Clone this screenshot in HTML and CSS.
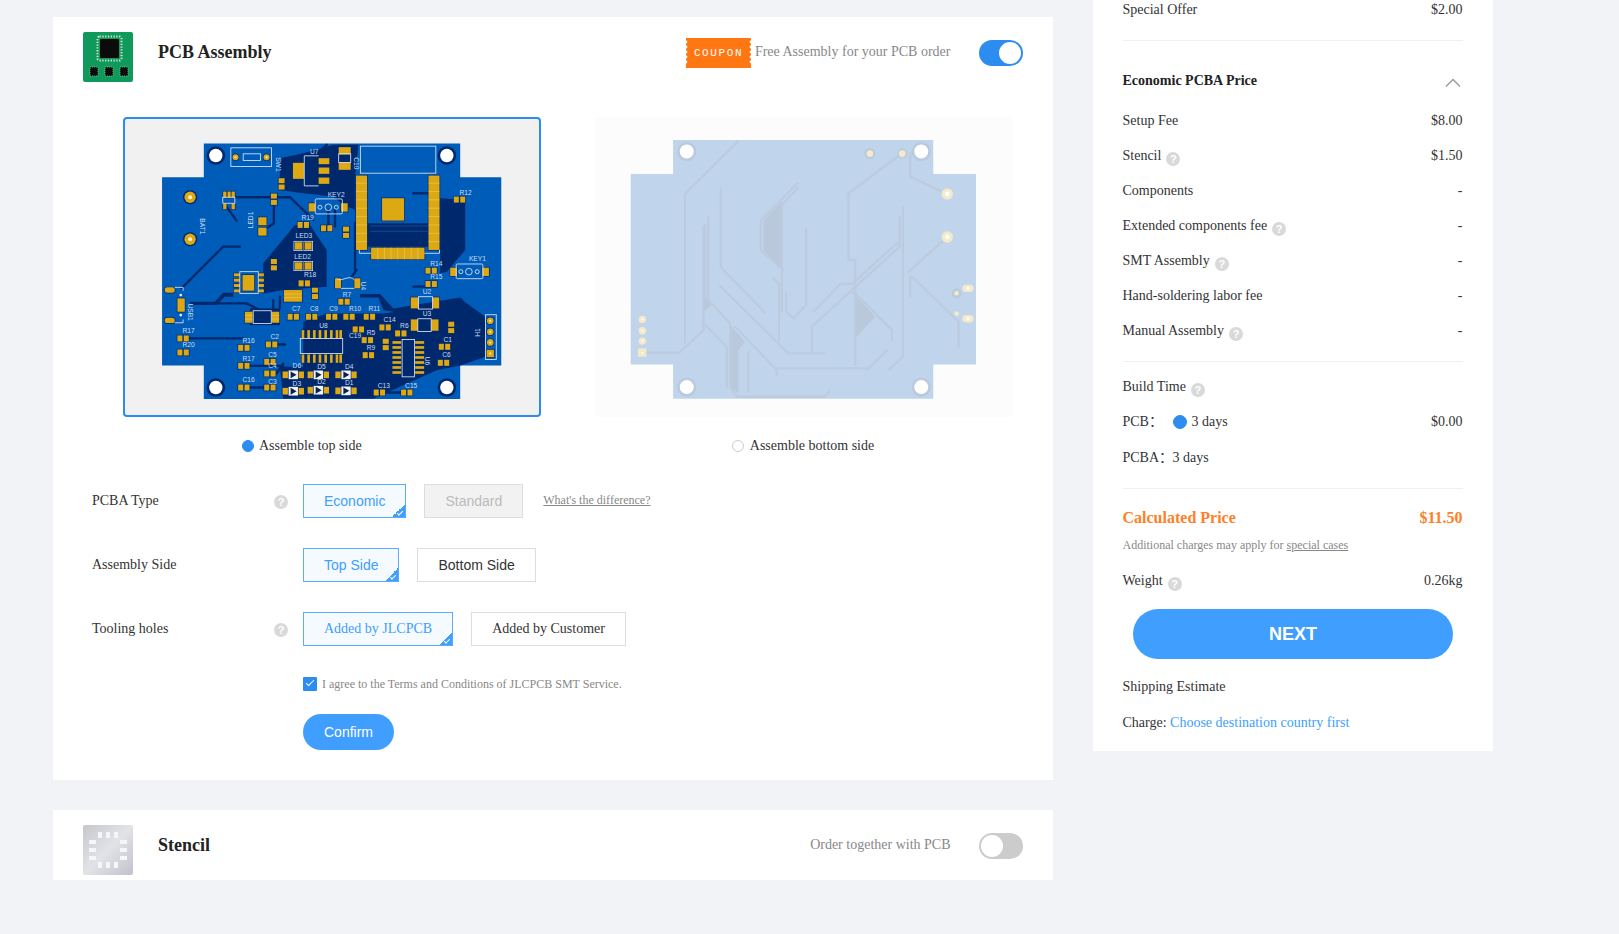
FILE: index.html
```html
<!DOCTYPE html>
<html lang="en">
<head>
  <meta charset="UTF-8">
  <title>PCB Assembly</title>
  <link rel="stylesheet" href="styles.css">
</head>
<body>

<svg class="defs" width="0" height="0">
  <defs>
    <g id="pair"><rect x="-17" y="-9" width="15" height="18"/><rect x="2" y="-9" width="15" height="18"/></g>
    <g id="vpair"><rect x="-9" y="-17" width="18" height="15"/><rect x="-9" y="2" width="18" height="15"/></g>
    <g id="led"><rect x="-29" y="-15" width="28" height="30" class="silk-fill"/><rect x="1" y="-15" width="28" height="30" class="silk-fill"/><rect x="-25" y="-11" width="22" height="22"/><rect x="4" y="-11" width="21" height="22"/></g>
    <g id="diode"><rect x="-32" y="-10" width="20" height="20"/><rect x="12" y="-10" width="20" height="20"/><rect x="-14" y="-13" width="28" height="26" class="silk-fill"/><path d="M-6 -7 L6 0 L-6 7Z" class="black"/></g>
  </defs>
</svg>

<div class="page">
  <div class="main">

    <div class="card assembly">
      <div class="card-head">
        <svg class="logo" viewBox="0 0 50 50">
          <rect width="50" height="50" rx="2" fill="#0f9a5b"/>
          <rect x="14.5" y="4.5" width="24" height="24" rx="2" fill="none" stroke="#cfe6d4" stroke-width="2" stroke-dasharray="1.3 1.5"/>
          <rect x="17" y="7" width="19" height="19" rx="1" fill="#0b0b0b"/>
          <g stroke="#7cc79f" stroke-width="0.8" stroke-dasharray="1 1">
            <rect x="7" y="35" width="8" height="9" fill="#0b0b0b"/>
            <rect x="22" y="35" width="8" height="9" fill="#0b0b0b"/>
            <rect x="37" y="35" width="8" height="9" fill="#0b0b0b"/>
          </g>
        </svg>
        <h2 class="title">PCB Assembly</h2>
        <div class="head-right">
          <svg class="coupon" viewBox="0 0 65 30">
            <rect width="65" height="30" fill="#ff7712"/>
            <g fill="#fff">
              <circle cx="0" cy="4" r="1.4"/><circle cx="0" cy="9" r="1.4"/><circle cx="0" cy="14" r="1.4"/><circle cx="0" cy="19" r="1.4"/><circle cx="0" cy="24" r="1.4"/>
              <circle cx="65" cy="4" r="1.4"/><circle cx="65" cy="9" r="1.4"/><circle cx="65" cy="14" r="1.4"/><circle cx="65" cy="19" r="1.4"/><circle cx="65" cy="24" r="1.4"/>
            </g>
            <text x="32.5" y="18" class="coupon-text" text-anchor="middle">COUPON</text>
          </svg>
          <span class="head-note">Free Assembly for your PCB order</span>
          <span class="toggle on"></span>
        </div>
      </div>

      <div class="boards">
        <div class="board selected">
          <svg viewBox="220 322 1252 898" class="board-svg">
            <path class="top-copper" d="M462 401H1230V502H1353V1066H1230V1166H462V1066H337V502H462Z"/>
            <g class="top-dark">
              <path d="M690 445L760 430L850 405H925L915 500V600L880 585L850 560L760 550L690 540Z"/>
              <path d="M640 760L735 645H780L830 720V830L700 840L640 850Z"/>
              <path d="M930 852H990L1030 895L1230 862L1240 870L1040 907L1000 900L985 862H930Z"/>
              <path d="M760 935L830 910H1000L1040 905L1230 865L1305 920V1040L1230 1066L1160 1080L970 1165H700L690 1070H760Z"/>
              <path d="M950 640H1135V710H950Z"/>
              <path d="M1170 565L1245 570V720L1190 785L1170 790Z"/>
              <path d="M600 895H690V945H600Z"/>
              <path d="M420 875H495L520 848H550V860H525L500 885H420Z"/>
              <circle cx="498" cy="437" r="28"/><circle cx="1190" cy="437" r="28"/>
              <circle cx="498" cy="1132" r="28"/><circle cx="1190" cy="1132" r="28"/>
              <circle cx="421" cy="562" r="21"/><circle cx="421" cy="688" r="21"/>
            </g>
            <path class="module-lines" d="M960 648H1135M960 664H1135"/>
            <g class="top-trace">
              <path d="M395 835L520 710H570"/><path d="M530 590L560 632"/><path d="M672 590V640L650 655"/>
              <path d="M555 562H720L790 630"/><path d="M1090 550H1135"/><path d="M1090 830H1135"/>
              <path d="M410 985H580"/><path d="M600 1132H650"/><path d="M670 1003H705"/><path d="M1060 1147H990"/>
              <path d="M1240 570V640"/><path d="M915 640V780"/><path d="M920 780L905 800"/>
              <path d="M830 405L730 500"/><path d="M870 525H915"/><path d="M835 600V650"/><path d="M855 600V650"/>
              <path d="M500 880H590L640 905"/><path d="M670 870V895"/><path d="M690 860V895"/>
              <path d="M600 1067H700"/><path d="M1205 932H1300"/><path d="M680 1090L700 1060"/>
            </g>
            <g class="holes">
              <circle cx="498" cy="437" r="20"/><circle cx="1190" cy="437" r="20"/>
              <circle cx="498" cy="1132" r="20"/><circle cx="1190" cy="1132" r="20"/>
            </g>
            <g class="gold">
              <circle cx="421" cy="562" r="17"/><circle cx="421" cy="688" r="17"/>
              <use href="#pair" x="1228" y="569"/><use href="#pair" x="760" y="645"/><use href="#pair" x="830" y="655"/>
              <use href="#pair" x="763" y="820"/><use href="#pair" x="882" y="875"/><use href="#pair" x="730" y="920"/>
              <use href="#pair" x="785" y="920"/><use href="#pair" x="845" y="920"/><use href="#pair" x="897" y="920"/>
              <use href="#pair" x="958" y="920"/><use href="#pair" x="1005" y="952"/><use href="#pair" x="925" y="958"/>
              <use href="#pair" x="1052" y="970"/><use href="#pair" x="952" y="990"/><use href="#pair" x="955" y="1035"/>
              <use href="#pair" x="400" y="985"/><use href="#pair" x="400" y="1027"/><use href="#pair" x="582" y="1013"/>
              <use href="#pair" x="665" y="1003"/><use href="#pair" x="582" y="1067"/><use href="#pair" x="660" y="1055"/>
              <use href="#pair" x="660" y="1090"/><use href="#pair" x="582" y="1132"/><use href="#pair" x="660" y="1132"/>
              <use href="#pair" x="1143" y="782"/><use href="#pair" x="1143" y="822"/><use href="#pair" x="1183" y="1010"/>
              <use href="#pair" x="1180" y="1058"/><use href="#pair" x="988" y="1147"/><use href="#pair" x="1070" y="1147"/>
              <use href="#vpair" x="672" y="568"/><use href="#vpair" x="695" y="522"/><use href="#vpair" x="672" y="764"/>
              <use href="#vpair" x="888" y="667"/><use href="#vpair" x="795" y="850"/><use href="#vpair" x="1007" y="1003"/>
              <use href="#vpair" x="1203" y="952"/>
              <use href="#led" x="760" y="708"/><use href="#led" x="760" y="768"/>
              <use href="#diode" x="730" y="1094"/><use href="#diode" x="805" y="1094"/><use href="#diode" x="888" y="1094"/>
              <use href="#diode" x="730" y="1143"/><use href="#diode" x="805" y="1140"/><use href="#diode" x="888" y="1142"/>

              <!-- wifi module -->
              <rect x="918" y="497" width="33" height="223"/><rect x="1135" y="497" width="33" height="223"/>
              <rect x="963" y="713" width="160" height="35"/><rect x="996" y="565" width="66" height="67"/>

              <!-- regulator, caps -->
              <rect x="729" y="459" width="33" height="48"/>
              <rect x="806" y="445" width="32" height="18"/><rect x="806" y="473" width="32" height="19"/><rect x="806" y="503" width="32" height="19"/>
              <rect x="866" y="412" width="36" height="22"/><rect x="866" y="458" width="36" height="22"/>
              <circle cx="557" cy="442" r="9"/><circle cx="650" cy="442" r="9"/>
              <rect x="776" y="580" width="20" height="25"/><rect x="873" y="580" width="20" height="25"/>
              <rect x="1200" y="773" width="20" height="25"/><rect x="1296" y="773" width="20" height="25"/>
              <rect x="520" y="545" width="10" height="18"/><rect x="533" y="545" width="10" height="18"/><rect x="545" y="545" width="10" height="18"/>
              <rect x="520" y="580" width="10" height="18"/><rect x="545" y="580" width="10" height="18"/>
              <rect x="625" y="622" width="25" height="24"/><rect x="625" y="653" width="25" height="24"/>

              <!-- SO8 and friends -->
              <rect x="578" y="795" width="35" height="47"/>
              <rect x="552" y="790" width="18" height="9"/><rect x="552" y="806" width="18" height="9"/><rect x="552" y="822" width="18" height="9"/><rect x="552" y="838" width="18" height="9"/>
              <rect x="625" y="790" width="17" height="9"/><rect x="625" y="806" width="17" height="9"/><rect x="625" y="822" width="17" height="9"/><rect x="625" y="838" width="17" height="9"/>
              <rect x="702" y="840" width="54" height="35"/>
              <rect x="585" y="905" width="23" height="33"/><rect x="665" y="905" width="23" height="33"/>
              <rect x="345" y="832" width="30" height="16" rx="8"/><rect x="345" y="923" width="30" height="16" rx="8"/>
              <rect x="383" y="865" width="22" height="40"/>
              <rect x="855" y="805" width="18" height="30"/><rect x="913" y="805" width="18" height="30"/>
              <rect x="1082" y="862" width="23" height="33"/><rect x="1147" y="862" width="20" height="33"/>
              <rect x="1082" y="928" width="21" height="34"/><rect x="1143" y="928" width="22" height="34"/>

              <!-- U8 pins -->
              <rect x="755" y="960" width="8" height="25"/><rect x="772" y="960" width="8" height="25"/><rect x="789" y="960" width="8" height="25"/><rect x="806" y="960" width="8" height="25"/><rect x="823" y="960" width="8" height="25"/><rect x="840" y="960" width="8" height="25"/><rect x="857" y="960" width="8" height="25"/><rect x="868" y="960" width="8" height="25"/>
              <rect x="755" y="1033" width="8" height="25"/><rect x="772" y="1033" width="8" height="25"/><rect x="789" y="1033" width="8" height="25"/><rect x="806" y="1033" width="8" height="25"/><rect x="823" y="1033" width="8" height="25"/><rect x="840" y="1033" width="8" height="25"/><rect x="857" y="1033" width="8" height="25"/><rect x="868" y="1033" width="8" height="25"/>

              <!-- U6 pins -->
              <rect x="1027" y="993" width="26" height="8"/><rect x="1027" y="1008" width="26" height="8"/><rect x="1027" y="1023" width="26" height="8"/><rect x="1027" y="1038" width="26" height="8"/><rect x="1027" y="1053" width="26" height="8"/><rect x="1027" y="1068" width="26" height="8"/><rect x="1027" y="1083" width="26" height="8"/>
              <rect x="1095" y="993" width="27" height="8"/><rect x="1095" y="1008" width="27" height="8"/><rect x="1095" y="1023" width="27" height="8"/><rect x="1095" y="1038" width="27" height="8"/><rect x="1095" y="1053" width="27" height="8"/><rect x="1095" y="1068" width="27" height="8"/><rect x="1095" y="1083" width="27" height="8"/>

              <!-- header -->
              <circle cx="1320" cy="932" r="10"/><circle cx="1320" cy="965" r="10"/><circle cx="1320" cy="997" r="10"/>
              <rect x="1309" y="1019" width="22" height="22"/>
            </g>
            <g class="pad-lines">
              <path d="M918 520H951M918 545H951M918 570H951M918 595H951M918 620H951M918 645H951M918 670H951M918 695H951"/>
              <path d="M1135 520H1168M1135 545H1168M1135 570H1168M1135 595H1168M1135 620H1168M1135 645H1168M1135 670H1168M1135 695H1168"/>
              <path d="M983 713V748M1003 713V748M1023 713V748M1043 713V748M1063 713V748M1083 713V748M1103 713V748"/>
              <path d="M702 852H756M702 863H756M585 916H608M585 927H608M665 916H688M665 927H688"/>
            </g>
            <g class="silk">
              <rect x="931" y="409" width="226" height="81"/>
              <path d="M928 720V730H963M1123 730H1168V720"/>
              <path d="M806 438H763V528H806"/>
              <rect x="866" y="432" width="36" height="26"/>
              <rect x="543" y="414" width="122" height="56"/><rect x="580" y="432" width="52" height="20"/>
              <rect x="796" y="567" width="81" height="45" rx="4"/><circle cx="810" cy="592" r="6"/><circle cx="835" cy="592" r="10"/><circle cx="859" cy="592" r="6"/>
              <rect x="1218" y="762" width="80" height="44" rx="4"/><circle cx="1232" cy="785" r="6"/><circle cx="1256" cy="785" r="10"/><circle cx="1281" cy="785" r="6"/>
              <rect x="519" y="562" width="36" height="18"/>
              <rect x="570" y="785" width="55" height="65"/>
              <rect x="610" y="902" width="54" height="38"/>
              <path d="M860 805C870 820 900 790 913 810"/><path d="M873 835H913"/>
              <rect x="1105" y="860" width="42" height="37"/><rect x="1103" y="926" width="40" height="38"/>
              <rect x="1306" y="914" width="32" height="134"/>
              <rect x="751" y="985" width="127" height="45"/>
              <rect x="1056" y="988" width="37" height="112"/>
              <path d="M375 832H400V842M375 938H400V928"/>
            </g>
            <g class="pin-holes">
              <circle cx="421" cy="562" r="6"/><circle cx="421" cy="688" r="6"/><circle cx="557" cy="442" r="3"/><circle cx="650" cy="442" r="3"/>
              <circle cx="1320" cy="932" r="3"/><circle cx="1320" cy="965" r="3"/><circle cx="1320" cy="997" r="3"/><circle cx="1320" cy="1030" r="3"/>
              <circle cx="393" cy="855" r="4"/><circle cx="393" cy="915" r="4"/>
            </g>
            <g class="silk-text">
              <text x="780" y="432">U7</text><text x="1228" y="555">R12</text><text x="833" y="560">KEY2</text><text x="755" y="630">R19</text>
              <text x="737" y="685">LED3</text><text x="733" y="746">LED2</text><text x="762" y="802">R18</text><text x="1256" y="753">KEY1</text>
              <text x="1140" y="768">R14</text><text x="1140" y="808">R15</text><text x="878" y="860">R7</text><text x="726" y="904">C7</text>
              <text x="780" y="904">C8</text><text x="838" y="904">C9</text><text x="897" y="904">R10</text><text x="955" y="904">R11</text>
              <text x="1118" y="852">U2</text><text x="1118" y="918">U3</text><text x="808" y="955">U8</text><text x="1000" y="936">C14</text>
              <text x="950" y="975">R5</text><text x="950" y="1020">R9</text><text x="1050" y="953">R6</text><text x="398" y="970">R17</text>
              <text x="398" y="1012">R20</text><text x="578" y="998">R16</text><text x="662" y="988">C2</text><text x="578" y="1052">R17</text>
              <text x="655" y="1040">C5</text><text x="655" y="1075">C4</text><text x="578" y="1116">C16</text><text x="655" y="1120">C3</text>
              <text x="728" y="1074">D6</text><text x="802" y="1076">D5</text><text x="885" y="1076">D4</text><text x="728" y="1126">D3</text>
              <text x="802" y="1122">D2</text><text x="885" y="1124">D1</text><text x="983" y="1133">C13</text><text x="1065" y="1133">C15</text>
              <text x="1180" y="996">C1</text><text x="1176" y="1042">C6</text><text x="897" y="985">C19</text>
              <text transform="translate(608 655) rotate(-90)">LED1</text><text transform="translate(452 625) rotate(90)">BAT1</text>
              <text transform="translate(416 880) rotate(90)">USB1</text><text transform="translate(678 442) rotate(90)">SW1</text>
              <text transform="translate(912 442) rotate(90)">C10</text><text transform="translate(1290 980) rotate(-90)">H1</text>
              <text transform="translate(934 815) rotate(90)">U4</text><text transform="translate(1126 1040) rotate(90)">U6</text>
            </g>
          </svg>
        </div>
        <div class="board">
          <svg viewBox="42 322 1256 898" class="board-svg">
            <path class="bottom-copper" d="M279 390H1059V492H1187V1063H1059V1166H279V1063H152V492H279Z"/>
            <g class="bottom-fill">
              <path d="M550 632L605 575V780L550 722Z"/>
              <path d="M825 855L885 920L825 985Z"/>
              <path d="M450 945L495 995L475 1020V1150L450 1130Z"/>
              <path d="M370 850L395 885L370 905Z"/>
            </g>
            <g class="bottom-trace">
              <path d="M473 395L315 552V998"/><path d="M422 538V772L555 908"/><path d="M652 520L542 632V722L610 780"/>
              <path d="M652 535L605 585V905"/><path d="M678 658V885L640 925L618 905V850"/>
              <path d="M385 622V870L450 940V1130L470 1160H735L748 1143"/><path d="M370 650V960L298 1028H190"/><path d="M375 645V860"/>
              <path d="M420 828L625 1030H735"/><path d="M580 805L597 822V990"/><path d="M700 905L780 822H815L950 700"/>
              <path d="M695 1025V950L960 708"/><path d="M805 550L965 430"/><path d="M805 550V750H825V1065"/>
              <path d="M818 850H825L935 960V990"/><path d="M968 590V1040L928 1078"/><path d="M958 620V705"/>
              <path d="M990 430V500L1100 552"/><path d="M985 785L1100 682"/><path d="M995 800L1135 935V1010"/><path d="M990 800V860"/>
              <path d="M465 950L590 1080V1095"/><path d="M590 1075H865L920 1020"/><path d="M505 1025V1145"/><path d="M370 940L440 1010V1130"/>
            </g>
            <g class="bottom-ring">
              <circle cx="320" cy="425" r="29"/><circle cx="1023" cy="425" r="29"/><circle cx="320" cy="1131" r="29"/><circle cx="1023" cy="1131" r="29"/>
              <circle cx="869" cy="431" r="17"/><circle cx="966" cy="431" r="15"/><circle cx="1129" cy="850" r="15"/>
            </g>
            <g class="bottom-pad">
              <circle cx="1101" cy="552" r="17"/><circle cx="1101" cy="681" r="17"/>
              <rect x="1146" y="824" width="34" height="22" rx="11"/><rect x="1146" y="915" width="34" height="22" rx="11"/>
              <circle cx="869" cy="431" r="10"/><circle cx="966" cy="431" r="10"/><circle cx="1129" cy="850" r="7"/><circle cx="1129" cy="911" r="7"/>
              <circle cx="187" cy="928" r="11"/><circle cx="187" cy="962" r="11"/><circle cx="187" cy="993" r="11"/>
              <rect x="174" y="1015" width="25" height="25"/>
            </g>
            <g class="holes">
              <circle cx="320" cy="425" r="21"/><circle cx="1023" cy="425" r="21"/><circle cx="320" cy="1131" r="21"/><circle cx="1023" cy="1131" r="21"/>
              <circle cx="1101" cy="552" r="7"/><circle cx="1101" cy="681" r="7"/><circle cx="1163" cy="835" r="5"/><circle cx="1163" cy="926" r="5"/>
              <circle cx="187" cy="928" r="3"/><circle cx="187" cy="962" r="3"/><circle cx="187" cy="993" r="3"/><circle cx="187" cy="1028" r="3"/>
            </g>
          </svg>
        </div>
      </div>

      <div class="sides">
        <label class="side side-top"><span class="radio checked"></span>Assemble top side</label>
        <label class="side side-bottom"><span class="radio"></span>Assemble bottom side</label>
      </div>

      <div class="opt-row">
        <span class="opt-label">PCBA Type</span>
        <span class="help">?</span>
        <button class="opt sans active">Economic</button>
        <button class="opt sans off">Standard</button>
        <a class="diff">What's the difference?</a>
      </div>
      <div class="opt-row">
        <span class="opt-label">Assembly Side</span>
        <span class="help blank"></span>
        <button class="opt sans active">Top Side</button>
        <button class="opt sans">Bottom Side</button>
      </div>
      <div class="opt-row">
        <span class="opt-label">Tooling holes</span>
        <span class="help">?</span>
        <button class="opt active">Added by JLCPCB</button>
        <button class="opt">Added by Customer</button>
      </div>

      <div class="agree">
        <span class="check"></span>
        I agree to the Terms and Conditions of JLCPCB SMT Service.
      </div>
      <button class="confirm">Confirm</button>
    </div>

    <div class="card stencil">
      <div class="card-head">
        <svg class="logo" viewBox="0 0 50 50">
          <defs>
            <linearGradient id="steel" x1="0" y1="0" x2="1" y2="1">
              <stop offset="0" stop-color="#c6c7ce"/>
              <stop offset="0.5" stop-color="#e2e3e7"/>
              <stop offset="1" stop-color="#c0c1cc"/>
            </linearGradient>
          </defs>
          <rect width="50" height="50" rx="2" fill="url(#steel)"/>
          <g fill="#f6f6f8">
            <rect x="15" y="7" width="4" height="6"/><rect x="23" y="7" width="4" height="6"/><rect x="31" y="7" width="4" height="6"/>
            <rect x="15" y="37" width="4" height="6"/><rect x="23" y="37" width="4" height="6"/><rect x="31" y="37" width="4" height="6"/>
            <rect x="6" y="15" width="7" height="4"/><rect x="6" y="23" width="7" height="4"/><rect x="6" y="31" width="7" height="4"/>
            <rect x="37" y="15" width="7" height="4"/><rect x="37" y="23" width="7" height="4"/><rect x="37" y="31" width="7" height="4"/>
          </g>
        </svg>
        <h2 class="title">Stencil</h2>
        <div class="head-right">
          <span class="head-note">Order together with PCB</span>
          <span class="toggle"></span>
        </div>
      </div>
    </div>

  </div>

  <div class="summary">
    <div class="price-row offer"><span>Special Offer</span><span>$2.00</span></div>

    <div class="block">
      <div class="block-head">
        <span>Economic PCBA Price</span>
        <svg class="chevron" width="16" height="9" viewBox="0 0 16 9"><path d="M1 8.5L8 1.5L15 8.5" fill="none" stroke="#999" stroke-width="1.3"/></svg>
      </div>
      <div class="price-row"><span>Setup Fee</span><span>$8.00</span></div>
      <div class="price-row"><span>Stencil<i class="help">?</i></span><span>$1.50</span></div>
      <div class="price-row"><span>Components</span><span>-</span></div>
      <div class="price-row"><span>Extended components fee<i class="help">?</i></span><span>-</span></div>
      <div class="price-row"><span>SMT Assembly<i class="help">?</i></span><span>-</span></div>
      <div class="price-row"><span>Hand-soldering labor fee</span><span>-</span></div>
      <div class="price-row"><span>Manual Assembly<i class="help">?</i></span><span>-</span></div>
    </div>

    <div class="block build">
      <div class="price-row"><span>Build Time<i class="help">?</i></span></div>
      <div class="price-row">
        <span class="build-line"><span class="build-name">PCB：</span><span class="radio big checked"></span>3 days</span>
        <span>$0.00</span>
      </div>
      <div class="price-row pcba"><span class="build-line"><span class="build-name">PCBA：</span>3 days</span></div>
    </div>

    <div class="total"><span>Calculated Price</span><span>$11.50</span></div>
    <div class="total-note">Additional charges may apply for <u>special cases</u></div>
    <div class="price-row weight"><span>Weight<i class="help">?</i></span><span>0.26kg</span></div>
    <button class="next">NEXT</button>
    <div class="price-row shipping"><span>Shipping Estimate</span></div>
    <div class="charge">Charge: <a>Choose destination country first</a></div>
  </div>
</div>

</body>
</html>
```

FILE: styles.css
```css
html, body {
  margin: 0;
  height: 934px;
  overflow: hidden;
}
body {
  background-color: #f1f3f7;
  color: #333;
  font-family: "Liberation Serif", "Noto Sans CJK SC", serif;
  font-size: 14px;
}
.defs {
  position: absolute;
}
.page {
  display: flex;
  align-items: flex-start;
  padding-left: 53px;
}
.main {
  width: 1000px;
  padding-top: 17px;
}
.card {
  background: white;
}
.assembly {
  height: 763px;
  margin-bottom: 30px;
}
.stencil {
  height: 70px;
}

/* card header */
.card-head {
  display: flex;
  align-items: flex-start;
  padding: 15px 30px 0;
}
.logo {
  width: 50px;
  height: 50px;
  flex: none;
}
.title {
  margin: 0 0 0 25px;
  font-size: 18px;
  font-weight: bold;
  line-height: 40px;
  color: #222;
}
.head-right {
  display: flex;
  align-items: flex-start;
  height: 30px;
  margin: 6px 0 0 auto;
}
.coupon {
  width: 65px;
  height: 30px;
  margin-right: 3.5px;
}
.coupon-text {
  fill: white;
  font-family: "Liberation Mono", monospace;
  font-size: 11px;
  letter-spacing: 1.6px;
}
.head-note {
  color: #888;
  line-height: 28px;
}
.toggle {
  display: block;
  box-sizing: border-box;
  width: 44px;
  height: 26px;
  margin: 2px 0 0 28.5px;
  padding: 2px;
  border-radius: 13px;
  background: #ccc;
}
.toggle::after {
  content: "";
  display: block;
  width: 22px;
  height: 22px;
  border-radius: 50%;
  background: white;
}
.toggle.on {
  background: #2d8cf0;
}
.toggle.on::after {
  margin-left: 18px;
}

/* board pictures */
.boards {
  display: flex;
  gap: 53px;
  margin: 35px 0 0 70px;
}
.board {
  box-sizing: border-box;
  width: 419px;
  height: 300px;
  border-radius: 4px;
  background: #fcfcfc;
}
.board.selected {
  width: 418px;
  border: 2px solid #2d8cf0;
  background: #f1f1f1;
}
.board-svg {
  display: block;
  width: 100%;
  height: 100%;
}
.selected .board-svg {
  margin: -2px;
  width: 418px;
  height: 300px;
}
.top-copper { fill: #005cb9; }
.top-dark { fill: #00286c; }
.module-lines {
  fill: none;
  stroke: #0a4c9e;
  stroke-width: 3;
}
.top-trace {
  fill: none;
  stroke: #00286c;
  stroke-width: 7;
  stroke-linecap: round;
}
.holes { fill: white; }
.gold {
  fill: #dca813;
  stroke: #00286c;
  stroke-width: 4;
  paint-order: stroke;
}
.pad-lines {
  fill: none;
  stroke: #e6c860;
  stroke-width: 2;
}
.silk {
  fill: none;
  stroke: #dfe9f5;
  stroke-width: 2.5;
}
.silk-fill { fill: #f2f4f8; }
.black { fill: #12203c; }
.pin-holes { fill: #f5f0dc; }
.silk-text {
  fill: #c9dcf0;
  font-family: "Liberation Sans", sans-serif;
  font-size: 20px;
}
.bottom-copper { fill: #c0d5ec; }
.bottom-fill { fill: #bac8dc; }
.bottom-trace {
  fill: none;
  stroke: #bccbdf;
  stroke-width: 7;
  stroke-linecap: round;
  stroke-linejoin: round;
}
.bottom-ring { fill: #b9c9de; }
.bottom-pad { fill: #f4e9c9; }

/* top / bottom radios */
.sides {
  display: flex;
  height: 20px;
  margin: 19px 0 28px 70px;
  line-height: 20px;
}
.side {
  display: flex;
  align-items: center;
  box-sizing: border-box;
  width: 471px;
  color: #333;
}
.side-top {
  padding-left: 119px;
}
.side-bottom {
  padding-left: 144px;
}
.radio {
  box-sizing: border-box;
  width: 12px;
  height: 12px;
  margin-right: 5px;
  border: 1px solid #ccc;
  border-radius: 50%;
  flex: none;
}
.side-bottom .radio {
  margin-right: 6px;
}
.radio.checked {
  border-color: #2d8cf0;
  background: #2d8cf0;
}
.radio.big {
  width: 14px;
  height: 14px;
  margin-right: 5px;
}

/* option rows */
.opt-row {
  display: flex;
  align-items: center;
  height: 34px;
  margin-bottom: 30px;
  padding-left: 39px;
}
.opt-label {
  width: 181px;
  margin-top: -1px;
}
.help {
  display: inline-block;
  box-sizing: border-box;
  width: 14px;
  height: 14px;
  margin-left: 5px;
  border-radius: 50%;
  background: #d9d9d9;
  color: white;
  font-family: "Liberation Sans", sans-serif;
  font-size: 11px;
  font-style: normal;
  font-weight: bold;
  line-height: 14px;
  text-align: center;
  vertical-align: -2.5px;
}
.opt-row .help {
  margin: 2px 15px 0 1px;
}
.help.blank {
  visibility: hidden;
}
.opt {
  position: relative;
  box-sizing: border-box;
  height: 34px;
  margin-right: 18px;
  padding: 0 20px;
  border: 1px solid #ddd;
  background: white;
  color: #333;
  font-family: "Liberation Serif", serif;
  font-size: 14px;
}
.opt.sans {
  font-family: "Liberation Sans", sans-serif;
}
.opt.active {
  border-color: #5aaaff;
  background: #f5faff;
  color: #409eff;
}
.opt.active::after {
  content: "";
  position: absolute;
  right: 0;
  bottom: 0;
  width: 13px;
  height: 13px;
  background: linear-gradient(135deg, transparent 50%, #409eff 50%);
}
.opt.active::before {
  content: "";
  position: absolute;
  z-index: 1;
  right: 2px;
  bottom: 3px;
  width: 5px;
  height: 2px;
  border-left: 1px solid white;
  border-bottom: 1px solid white;
  transform: rotate(-45deg);
}
.opt.off {
  background: #f2f2f2;
  color: #bbb;
}
.diff {
  margin: -1px 0 0 2px;
  color: #888;
  font-size: 12px;
  text-decoration: underline;
}

/* agree and confirm */
.agree {
  display: flex;
  align-items: center;
  height: 14px;
  margin: 31px 0 23px 250px;
  color: #888;
  font-size: 12px;
}
.check {
  position: relative;
  width: 14px;
  height: 14px;
  margin-right: 5px;
  border-radius: 1px;
  background: #2d8cf0;
}
.check::after {
  content: "";
  position: absolute;
  left: 3px;
  top: 3px;
  width: 7px;
  height: 3px;
  border-left: 1.5px solid white;
  border-bottom: 1.5px solid white;
  transform: rotate(-45deg);
}
.confirm {
  display: block;
  width: 91px;
  height: 36px;
  margin-left: 250px;
  border: none;
  border-radius: 18px;
  background: #409eff;
  color: white;
  font-family: "Liberation Sans", sans-serif;
  font-size: 14px;
}

/* right summary */
.summary {
  box-sizing: border-box;
  width: 400px;
  margin-left: 40px;
  padding: 0 30.5px 9px 29.5px;
  background: white;
}
.price-row {
  display: flex;
  justify-content: space-between;
  line-height: 35px;
  height: 35px;
}
.offer {
  height: 18px;
  line-height: 20px;
  padding-bottom: 22px;
  border-bottom: 1px solid #f0f0f0;
}
.block {
  padding-bottom: 13px;
  border-bottom: 1px solid #f0f0f0;
}
.block-head {
  display: flex;
  justify-content: space-between;
  align-items: center;
  height: 24px;
  padding: 28px 0 10px;
  font-weight: bold;
  color: #222;
}
.chevron {
  margin: 2px 2px 0 0;
}
.build {
  padding: 7px 0 13px;
}
.pcba {
  margin-top: 1px;
}
.build-line {
  display: flex;
  align-items: center;
}
.build-name {
  width: 50px;
}
.total {
  display: flex;
  justify-content: space-between;
  margin-top: 17px;
  color: #ff8026;
  font-size: 16px;
  font-weight: bold;
  line-height: 24px;
}
.total-note {
  margin-top: 3px;
  color: #888;
  font-size: 12px;
  line-height: 24px;
}
.weight {
  margin-top: 6px;
}
.next {
  display: block;
  width: 320px;
  height: 50px;
  margin: 11px 0 10px 10.5px;
  border: none;
  border-radius: 25px;
  background: #409eff;
  color: white;
  font-family: "Liberation Sans", sans-serif;
  font-size: 18px;
  font-weight: bold;
}
.charge {
  line-height: 38px;
}
.charge a {
  color: #409eff;
}
```
